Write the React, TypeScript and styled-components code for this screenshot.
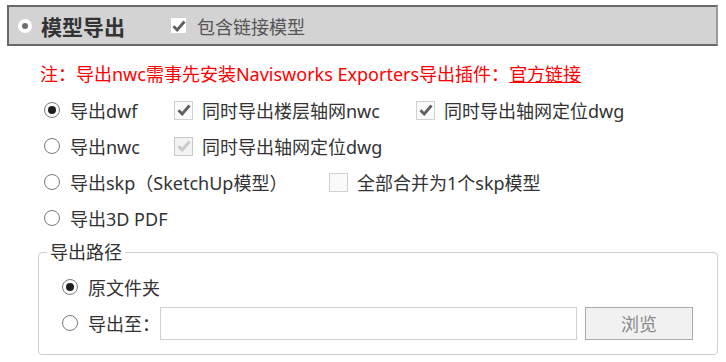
import React from 'react';
import styled, { createGlobalStyle } from 'styled-components';

const GlobalStyle = createGlobalStyle`
  html, body {
    margin: 0;
    padding: 0;
    background: #ffffff;
  }
  body {
    font-family: "Noto Sans", "Noto Sans CJK SC", sans-serif;
    color: #333333;
  }
`;

const Page = styled.div`
  width: 726px;
  height: 362px;
  overflow: hidden;
  padding: 5px 8px 0 7px;
  box-sizing: border-box;
`;

const HeaderBar = styled.div`
  height: 41px;
  box-sizing: border-box;
  display: flex;
  align-items: center;
  background: #d3d3d3;
  border: 2px solid #686868;
  border-right-color: #9a9a9a;
  padding-left: 9px;
`;

const HeaderDot = styled.span`
  width: 14px;
  height: 14px;
  border-radius: 50%;
  background: #ffffff;
  display: inline-flex;
  align-items: center;
  justify-content: center;

  &::after {
    content: '';
    width: 6px;
    height: 6px;
    border-radius: 50%;
    background: #6e6e6e;
  }
`;

const HeaderTitle = styled.span`
  margin-left: 9px;
  font-size: 21px;
  font-weight: 700;
  color: #333333;
  width: 130px;
`;

const HeaderBox = styled.span`
  width: 15px;
  height: 15px;
  background: #ffffff;
  display: inline-flex;
  align-items: center;
  justify-content: center;
  flex: none;
`;

const HeaderCheckLabel = styled.span`
  margin-left: 11px;
  font-size: 18px;
  color: #555555;
`;

const Body = styled.div`
  padding-left: 30px;
`;

const Note = styled.div`
  margin-top: 16px;
  padding-left: 3px;
  height: 24px;
  line-height: 24px;
  font-size: 18px;
  color: #ff0000;
  white-space: nowrap;
`;

const NoteLink = styled.a`
  color: #ff0000;
  text-decoration: underline;
`;

const OptionList = styled.div`
  margin-top: 6px;
  padding-left: 7px;
`;

const Row = styled.div`
  height: 36px;
  display: flex;
  align-items: center;
`;

const Cell = styled.div<{ $width?: number }>`
  display: flex;
  align-items: center;
  width: ${({ $width }) => ($width ? `${$width}px` : 'auto')};
  flex: none;
`;

const Label = styled.span`
  font-size: 18px;
  color: #333333;
  white-space: nowrap;
`;

const RadioCircle = styled.span<{ $checked?: boolean }>`
  width: 16px;
  height: 16px;
  box-sizing: border-box;
  border-radius: 50%;
  border: 1px solid #7a7a7a;
  background: #ffffff;
  display: inline-flex;
  align-items: center;
  justify-content: center;
  margin-right: 10px;
  flex: none;

  &::after {
    content: '';
    width: 8px;
    height: 8px;
    border-radius: 50%;
    background: ${({ $checked }) => ($checked ? '#1f1f1f' : 'transparent')};
  }
`;

const Box = styled.span<{ $disabled?: boolean }>`
  width: 19px;
  height: 19px;
  box-sizing: border-box;
  border: 1px solid ${({ $disabled }) => ($disabled ? '#c8c8c8' : '#d0d0d0')};
  background: ${({ $disabled }) => ($disabled ? '#f2f2f2' : '#fafafa')};
  display: inline-flex;
  align-items: center;
  justify-content: center;
  margin-right: 9px;
  flex: none;
`;

const Fieldset = styled.fieldset`
  margin: 4px 0 0 1px;
  width: 680px;
  box-sizing: border-box;
  border: 1px solid #cfcfcf;
  border-radius: 4px;
  padding: 5px 0 13px 0;
`;

const Legend = styled.legend`
  font-size: 18px;
  color: #333333;
  padding: 0 3px;
  margin-left: 8px;
  line-height: 24px;
`;

const PathRow = styled.div`
  height: 36px;
  display: flex;
  align-items: center;
  padding-left: 23px;
`;

const PathInput = styled.div`
  width: 417px;
  height: 33px;
  box-sizing: border-box;
  border: 1px solid #d0d0d0;
  background: #ffffff;
`;

const BrowseButton = styled.div`
  width: 108px;
  height: 33px;
  box-sizing: border-box;
  margin-left: 8px;
  border: 1px solid #a9a9a9;
  background: #f1f1f1;
  color: #8a8a8a;
  font-size: 18px;
  display: flex;
  align-items: center;
  justify-content: center;
`;

const Check = ({ color }: { color: string }) => (
  <svg width="14" height="12" viewBox="0 0 14 12">
    <path d="M1.5 6.2 L5.2 10 L12.5 1.5" fill="none" stroke={color} strokeWidth="2.8" />
  </svg>
);

const Radio = ({ checked, label }: { checked?: boolean; label: string }) => (
  <>
    <RadioCircle $checked={checked} />
    <Label>{label}</Label>
  </>
);

const CheckItem = ({
  checked,
  disabled,
  label,
}: {
  checked?: boolean;
  disabled?: boolean;
  label: string;
}) => (
  <>
    <Box $disabled={disabled}>
      {checked && <Check color={disabled ? '#c8c8c8' : '#606060'} />}
    </Box>
    <Label>{label}</Label>
  </>
);

export default function App() {
  return (
    <Page>
      <GlobalStyle />
      <HeaderBar>
        <HeaderDot />
        <HeaderTitle>模型导出</HeaderTitle>
        <HeaderBox>
          <Check color="#606060" />
        </HeaderBox>
        <HeaderCheckLabel>包含链接模型</HeaderCheckLabel>
      </HeaderBar>

      <Body>
        <Note>
          注：导出nwc需事先安装Navisworks Exporters导出插件：<NoteLink>官方链接</NoteLink>
        </Note>

        <OptionList>
          <Row>
            <Cell $width={130}>
              <Radio checked label="导出dwf" />
            </Cell>
            <Cell $width={242}>
              <CheckItem checked label="同时导出楼层轴网nwc" />
            </Cell>
            <Cell>
              <CheckItem checked label="同时导出轴网定位dwg" />
            </Cell>
          </Row>
          <Row>
            <Cell $width={130}>
              <Radio label="导出nwc" />
            </Cell>
            <Cell>
              <CheckItem checked disabled label="同时导出轴网定位dwg" />
            </Cell>
          </Row>
          <Row>
            <Cell $width={285}>
              <Radio label="导出skp（SketchUp模型）" />
            </Cell>
            <Cell>
              <CheckItem label="全部合并为1个skp模型" />
            </Cell>
          </Row>
          <Row>
            <Cell>
              <Radio label="导出3D PDF" />
            </Cell>
          </Row>
        </OptionList>

        <Fieldset>
          <Legend>导出路径</Legend>
          <PathRow>
            <Radio checked label="原文件夹" />
          </PathRow>
          <PathRow>
            <Radio label="导出至：" />
            <PathInput />
            <BrowseButton>浏览</BrowseButton>
          </PathRow>
        </Fieldset>
      </Body>
    </Page>
  );
}
